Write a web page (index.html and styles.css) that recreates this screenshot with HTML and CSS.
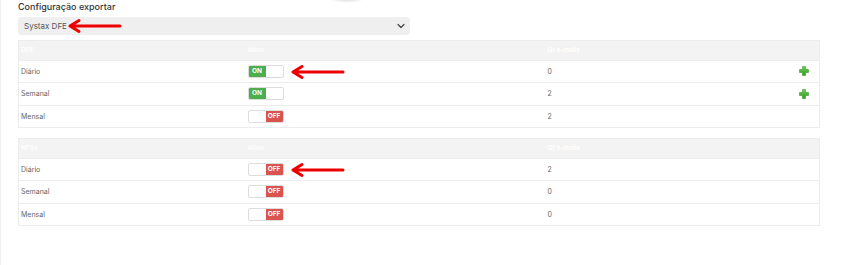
FILE: index.html
```html
<!DOCTYPE html>
<html lang="pt">
<head>
<meta charset="utf-8">
<link rel="stylesheet" href="styles.css">
</head>
<body>
<div class="blob"></div>
<main class="page">
  <h1 class="title">Configuração exportar</h1>
  <div class="select-wrap">
    <div class="select">
      <span>Systax DFE</span>
      <svg class="chev" width="8" height="6" viewBox="0 0 8 6"><path d="M1 1.5 L4 4.5 L7 1.5" fill="none" stroke="#444" stroke-width="1.2" stroke-linecap="round" stroke-linejoin="round"/></svg>
    </div>
    <svg class="arrow arrow-select" width="56" height="16" viewBox="0 0 56 16"><path d="M3 8 H53 M3 8 L12 2.5 M3 8 L12 13.5" fill="none" stroke="#e00" stroke-width="3" stroke-linecap="round" stroke-linejoin="round"/></svg>
  </div>

  <table class="grid">
    <colgroup><col class="c1"><col class="c2"><col class="c3"><col class="c4"></colgroup>
    <thead><tr><th>DFE</th><th>Ativo</th><th>Qt e-mails</th><th></th></tr></thead>
    <tbody>
      <tr><td>Diário</td><td><div class="cell-tog"><span class="tog on"><b>ON</b><i></i></span><svg class="arrow" width="56" height="16" viewBox="0 0 56 16"><path d="M3 8 H53 M3 8 L12 2.5 M3 8 L12 13.5" fill="none" stroke="#e00" stroke-width="3" stroke-linecap="round" stroke-linejoin="round"/></svg></div></td><td>0</td><td><svg class="plus" width="10" height="10" viewBox="0 0 10 10"><defs><linearGradient id="g1" x1="0" y1="0" x2="0" y2="1"><stop offset="0" stop-color="#6fd05a"/><stop offset="1" stop-color="#2e9a1e"/></linearGradient></defs><path d="M3.5 0.5 H6.5 V3.5 H9.5 V6.5 H6.5 V9.5 H3.5 V6.5 H0.5 V3.5 H3.5 Z" fill="url(#g1)" stroke="#3a9a2a" stroke-width="0.6"/></svg></td></tr>
      <tr><td>Semanal</td><td><div class="cell-tog"><span class="tog on"><b>ON</b><i></i></span></div></td><td>2</td><td><svg class="plus" width="10" height="10" viewBox="0 0 10 10"><path d="M3.5 0.5 H6.5 V3.5 H9.5 V6.5 H6.5 V9.5 H3.5 V6.5 H0.5 V3.5 H3.5 Z" fill="url(#g1)" stroke="#3a9a2a" stroke-width="0.6"/></svg></td></tr>
      <tr><td>Mensal</td><td><div class="cell-tog"><span class="tog off"><i></i><b>OFF</b></span></div></td><td>2</td><td></td></tr>
    </tbody>
  </table>

  <table class="grid second">
    <colgroup><col class="c1"><col class="c2"><col class="c3"><col class="c4"></colgroup>
    <thead><tr><th>NFSe</th><th>Ativo</th><th>Qt e-mails</th><th></th></tr></thead>
    <tbody>
      <tr><td>Diário</td><td><div class="cell-tog"><span class="tog off"><i></i><b>OFF</b></span><svg class="arrow" width="56" height="16" viewBox="0 0 56 16"><path d="M3 8 H53 M3 8 L12 2.5 M3 8 L12 13.5" fill="none" stroke="#e00" stroke-width="3" stroke-linecap="round" stroke-linejoin="round"/></svg></div></td><td>2</td><td></td></tr>
      <tr><td>Semanal</td><td><div class="cell-tog"><span class="tog off"><i></i><b>OFF</b></span></div></td><td>0</td><td></td></tr>
      <tr><td>Mensal</td><td><div class="cell-tog"><span class="tog off"><i></i><b>OFF</b></span></div></td><td>0</td><td></td></tr>
    </tbody>
  </table>
</main>
</body>
</html>
```
FILE: styles.css
```css
html, body { margin: 0; padding: 0; background: #fff; }
body {
  font-family: "Inter", "Liberation Sans", sans-serif;
  color: #555;
  width: 850px;
  height: 265px;
  overflow: hidden;
  position: relative;
  border-left: 1px solid #f0f0f0;
  box-sizing: border-box;
}
.blob {
  position: absolute;
  left: 328px;
  top: -6px;
  width: 36px;
  height: 9px;
  border-radius: 50%;
  background: radial-gradient(ellipse at center, rgba(0,0,0,0.18), rgba(0,0,0,0) 70%);
}
.page {
  padding: 1px 0 0 17px;
  width: 800px;
}
.title {
  margin: 0;
  font-size: 9px;
  font-weight: 500;
  color: #333;
  line-height: 12px;
}
.select-wrap {
  margin-top: 4px;
  display: flex;
  align-items: center;
  position: relative;
}
.select {
  width: 392px;
  height: 18px;
  box-sizing: border-box;
  background: #efefef;
  border-radius: 4px;
  display: flex;
  align-items: center;
  justify-content: space-between;
  padding: 0 5px 0 6px;
  font-size: 8px;
  color: #555;
}
.arrow-select {
  position: absolute;
  left: 49px;
  top: 1px;
}
.grid {
  width: 801px;
  border-collapse: collapse;
  margin-top: 5px;
  border: 1px solid #ececec;
  font-size: 7px;
  table-layout: fixed;
}
.grid.second { margin-top: 10px; }
.c1 { width: 227px; }
.c2 { width: 300px; }
.c3 { width: 248px; }
.c4 { width: 26px; }
.grid th {
  background: #f3f3f3;
  color: #fff;
  font-weight: 600;
  text-align: left;
  height: 18.5px;
  padding: 0 0 0 2px;
  font-size: 6.5px;
}
.grid td {
  height: 21.5px;
  padding: 0 0 0 2px;
  border-top: 1px solid #ececec;
  vertical-align: middle;
  color: #666;
}
.cell-tog {
  display: flex;
  align-items: center;
  gap: 6px;
}
.cell-tog .arrow { margin-top: 1px; }
.tog {
  display: inline-flex;
  width: 36px;
  height: 13px;
  box-sizing: border-box;
  border: 1px solid #dcdcdc;
  border-radius: 2px;
  overflow: hidden;
  background: #fff;
}
.tog b, .tog i { width: 50%; display: block; }
.tog b {
  color: #fff;
  font-size: 6.5px;
  font-weight: 700;
  line-height: 11px;
  text-align: center;
}
.tog.on b { background: #4cae4c; }
.tog.off b { background: #d9534f; }
.plus { display: block; margin-left: 3px; }
```
